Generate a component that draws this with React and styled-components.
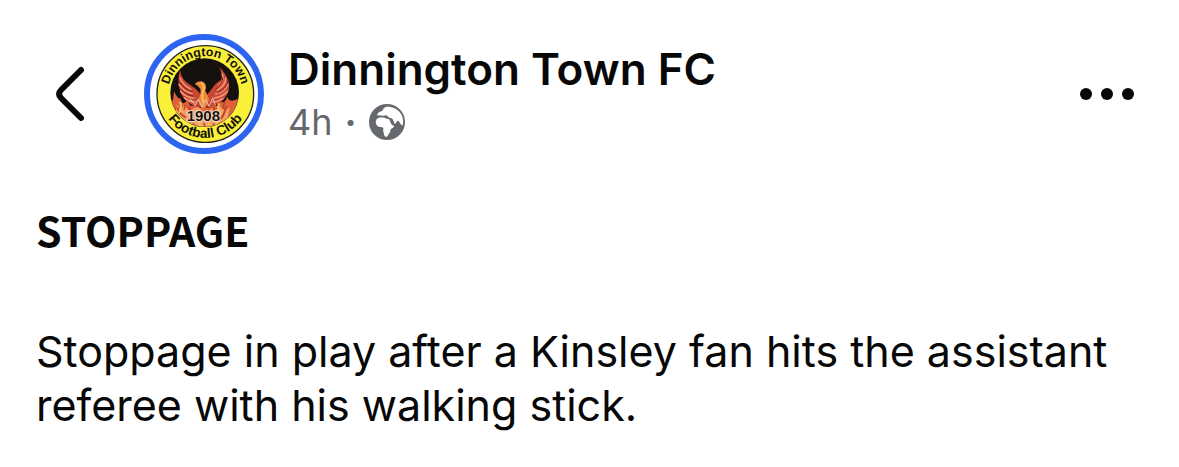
import React from 'react'
import styled, { createGlobalStyle } from 'styled-components'

const GlobalStyle = createGlobalStyle`
    * {
        box-sizing: border-box;
    }
    body {
        margin: 0;
        background-color: #ffffff;
        color: #080809;
        font-family: Inter, "Liberation Sans", sans-serif;
    }
`

const Post = styled.article`
    padding: 34px 36px 32px;
`

const Header = styled.header`
    display: flex;
    align-items: center;
`

const IconButton = styled.button`
    display: flex;
    align-items: center;
    justify-content: ${props => props.$align || 'center'};
    width: ${props => props.$width};
    height: 64px;
    padding: 0 8px 0 16px;
    border: 0;
    background: none;
    color: #080809;
    cursor: pointer;
`

const Avatar = styled.a`
    flex: none;
    width: 120px;
    height: 120px;
    margin-right: 24px;
    border: 6px solid #2d65f0;
    border-radius: 50%;

    svg {
        display: block;
        width: 100%;
        height: 100%;
        border-radius: 50%;
    }
`

const Author = styled.div`
    flex: 1;
    min-width: 0;

    h1 {
        margin: 0;
        font-size: 44px;
        font-weight: 600;
        line-height: 56px;
    }
    h1 a {
        color: inherit;
        text-decoration: none;
    }
`

const Meta = styled.div`
    display: flex;
    align-items: center;
    gap: 12px;
    color: #65686c;
    font-size: 36px;
    line-height: 50px;
`

const Dot = styled.span`
    font-weight: 700;
`

const Message = styled.div`
    margin-top: 48px;
    font-size: 43px;
    line-height: 54px;

    h2 {
        margin: 0 0 68px;
        font-family: "Noto Sans CJK SC", "Noto Sans", sans-serif;
        font-size: 41px;
        font-weight: 700;
        line-height: 54px;
    }
    p {
        margin: 0;
    }
`

function Crest() {
    return (
        <svg viewBox="30 30 324 324" role="img" aria-label="Dinnington Town Football Club crest">
            <defs>
                <path id="crest-top" d="M84 190 A112 112 0 0 1 308 190" />
                <path id="crest-bottom" d="M60 188 A136 136 0 0 0 332 188" />
                <clipPath id="crest-inner">
                    <circle cx="194" cy="188" r="102" />
                </clipPath>
            </defs>
            <circle cx="196" cy="192" r="145" fill="#faf03a" stroke="#24231c" strokeWidth="4" />
            <circle cx="194" cy="188" r="103" fill="#15110f" />
            <g clipPath="url(#crest-inner)">
                <path d="M88 226 Q100 222 102 184 Q115 212 121 204 Q128 232 142 210 Q153 238 163 222 Q180 240 192 228 Q208 240 221 222 Q232 238 240 212 Q252 226 262 200 Q268 222 300 204 V300 H88Z" fill="#e0603a" />
                <path d="M98 250 Q112 246 110 222 Q126 250 132 222 Q146 252 160 236 Q176 224 188 244 Q204 252 216 234 Q232 250 240 226 Q252 252 270 232 Q264 270 248 300 H126Z" fill="#f4a06a" />
                <path d="M112 232 Q119 255 138 262 M146 228 Q153 240 148 250 M222 230 Q219 242 228 250 M258 228 Q254 256 240 268" fill="none" stroke="#c8452a" strokeWidth="6" />
                <path d="M120 120 Q110 154 122 190 Q136 222 172 230 L214 230 Q246 222 260 196 Q282 158 238 110 Q248 134 244 150 Q228 156 210 184 L199 196 L181 192 Q168 174 150 164 Q124 150 120 120Z" fill="#c94730" />
                <path d="M120 144 Q128 164 152 178 M117 164 Q130 184 156 190 M122 184 Q138 202 162 204 M134 204 Q148 216 166 216 M247 132 Q254 150 236 168 M257 144 Q258 166 232 180 M264 162 Q256 186 227 192 M262 184 Q246 203 222 204 M248 206 Q236 216 218 216" fill="none" stroke="#f0937a" strokeWidth="5" strokeLinecap="round" />
                <path d="M248 142 Q250 160 226 180 M264 152 Q260 178 232 188 M118 155 Q132 178 158 186 M122 177 Q138 197 162 199" fill="none" stroke="#7d1d18" strokeWidth="3" />
                <path d="M164 162 Q176 149 190 156 Q202 164 196 182 L207 208 Q202 230 188 236 Q176 224 176 207 Q184 190 181 176 Q177 168 164 162Z" fill="#f28a3c" />
                <path d="M182 158 Q194 164 190 181 Q184 195 190 218" fill="none" stroke="#f9c65b" strokeWidth="5" />
                <path d="M150 206 L166 226 L174 208 L186 230 L197 209 L207 229 L218 204 L226 226" fill="none" stroke="#dcc0b4" strokeWidth="3" />
                <path d="M120 216 Q127 232 117 249 M237 220 Q229 239 244 252 M137 270 Q151 280 150 293 M173 275 Q183 283 181 296 M209 276 Q202 286 211 296 M235 272 Q226 282 234 291" fill="none" stroke="#f8c052" strokeWidth="6" />
                <path d="M136 224 L132 240 M254 216 L248 236 M160 280 L164 292 M191 279 L196 292 M222 280 L218 292" stroke="#b0422b" strokeWidth="4" />
            </g>
            <g fontFamily="Liberation Sans, Arial, sans-serif" fill="#15130c">
                <text fontSize="37" fontWeight="700" textAnchor="middle">
                    <textPath href="#crest-top" startOffset="50%">Dinnington Town</textPath>
                </text>
                <text fontSize="41" fontWeight="700" textAnchor="middle">
                    <textPath href="#crest-bottom" startOffset="50%">Football Club</textPath>
                </text>
                <text x="190" y="273" fontSize="45" fontWeight="700" textAnchor="middle" stroke="#fbe3d2" strokeWidth="5" strokeLinejoin="round" paintOrder="stroke">1908</text>
            </g>
        </svg>
    )
}

function Globe() {
    return (
        <svg width="36" height="36" viewBox="26 26 108 108" role="img" aria-label="Public">
            <circle cx="80" cy="80" r="54" fill="#65686c" />
            <path d="M50 60 Q53 50 63 48 Q68 46 70 39 Q76 33 86 34 Q108 36 121 54 Q130 68 128 84 L126 91 Q121 88 117 80 Q113 73 110 78 Q107 84 103 86 Q100 73 94 69 Q88 69 84 64 Q78 58 70 61 Q60 61 50 60Z" fill="#ffffff" />
            <path d="M46 79 Q48 68 56 67 Q64 64 72 67 Q80 71 86 71 Q90 77 92 85 Q96 91 102 92 Q99 98 91 102 Q91 111 85 116 Q83 124 77 125 Q71 124 71 116 Q67 108 69 98 Q66 94 58 95 Q47 92 46 79Z" fill="#ffffff" />
        </svg>
    )
}

function App() {
    return (
        <>
            <GlobalStyle />
            <Post>
                <Header>
                    <IconButton $width="108px" $align="flex-start" aria-label="Back">
                        <svg width="36" height="60" viewBox="0 0 36 60" fill="none" stroke="currentColor" strokeWidth="6" strokeLinecap="round" strokeLinejoin="round">
                            <path d="M29 6 L9 26 Q5 30 9 34 L29 54" />
                        </svg>
                    </IconButton>
                    <Avatar href="#profile">
                        <Crest />
                    </Avatar>
                    <Author>
                        <h1><a href="#profile">Dinnington Town FC</a></h1>
                        <Meta>
                            <time>4h</time>
                            <Dot>·</Dot>
                            <Globe />
                        </Meta>
                    </Author>
                    <IconButton $width="80px" aria-label="More options">
                        <svg width="56" height="14" viewBox="0 0 56 14" fill="currentColor">
                            <circle cx="7" cy="7" r="6" />
                            <circle cx="28" cy="7" r="6" />
                            <circle cx="49" cy="7" r="6" />
                        </svg>
                    </IconButton>
                </Header>
                <Message>
                    <h2>STOPPAGE</h2>
                    <p>Stoppage in play after a Kinsley fan hits the assistant referee with his walking stick.</p>
                </Message>
            </Post>
        </>
    )
}

export default App
